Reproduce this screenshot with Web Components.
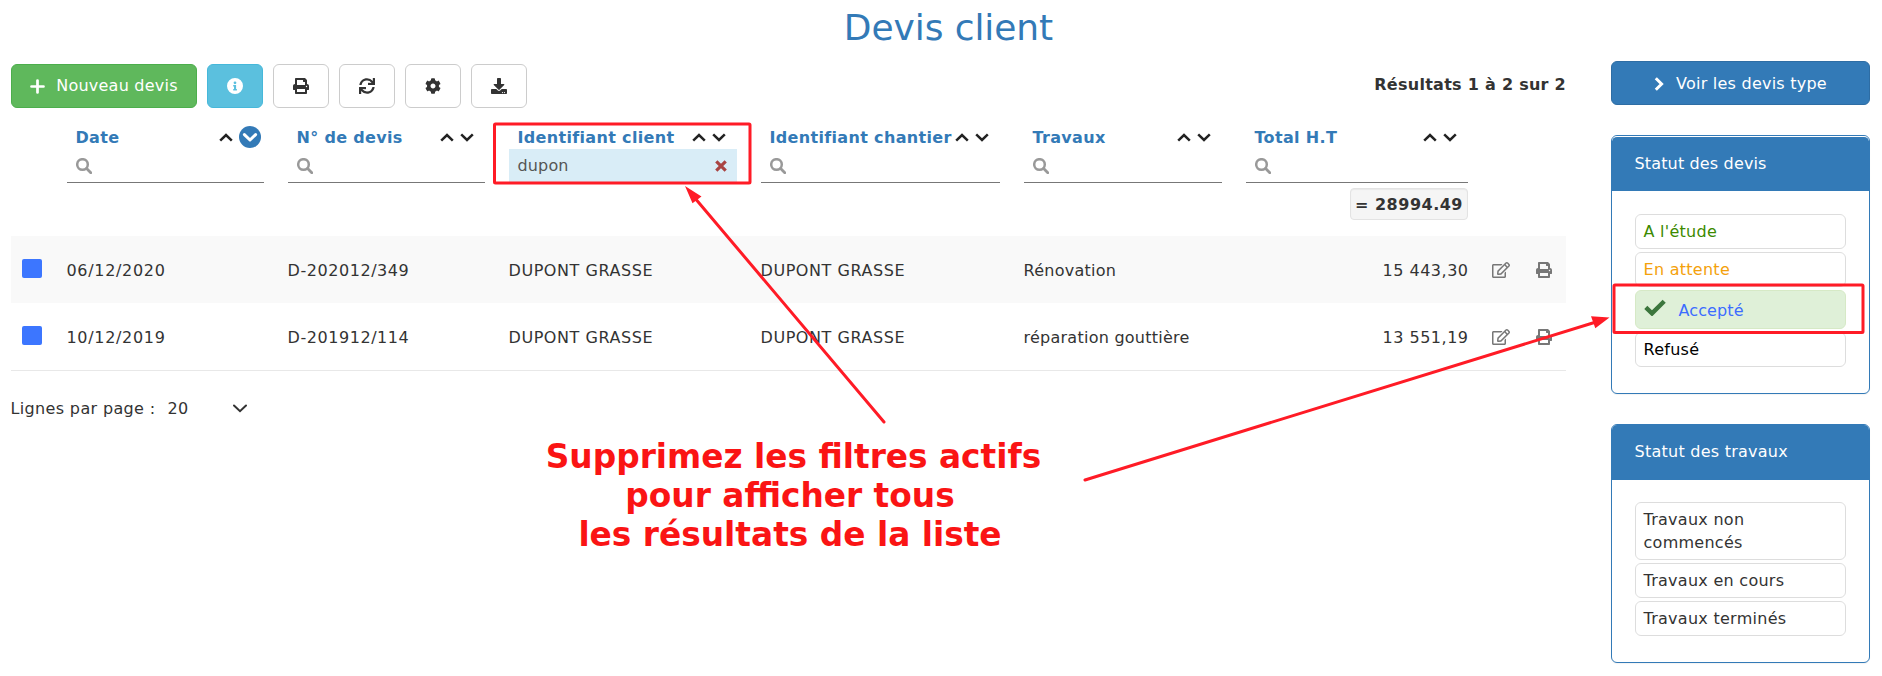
<!DOCTYPE html>
<html lang="fr">
<head>
<meta charset="utf-8">
<title>Devis client</title>
<style>
html,body{margin:0;background:#fff}
body{font:16px/22.86px Verdana,"DejaVu Sans",sans-serif;color:#333}
</style>
</head>
<body>
<devis-page></devis-page>
<script>
const ICONS = {
  plus: ['0 0 16 16','<path d="M8 1.6v12.8M1.6 8h12.8" fill="none" stroke="currentColor" stroke-width="2.9" stroke-linecap="round"/>'],
  info: ['0 0 16 16','<path fill-rule="evenodd" d="M8 0a8 8 0 1 0 0 16A8 8 0 0 0 8 0zm0 3.4a1.4 1.4 0 1 1 0 2.8 1.4 1.4 0 0 1 0-2.8zM6.2 7h2.9v4h.8v1.4H6.2V11H7V8.4h-.8z" fill="currentColor"/>'],
  print: ['0 0 512 512','<path fill="currentColor" d="M448 192V77.25c0-8.49-3.37-16.62-9.37-22.63L393.37 9.37c-6-6-14.14-9.37-22.63-9.37H96C78.33 0 64 14.33 64 32v160c-35.35 0-64 28.65-64 64v112c0 8.84 7.16 16 16 16h48v96c0 17.67 14.33 32 32 32h320c17.67 0 32-14.33 32-32v-96h48c8.84 0 16-7.16 16-16V256c0-35.35-28.65-64-64-64zm-64 256H128v-96h256v96zm0-224H128V64h192v48c0 8.84 7.16 16 16 16h48v96zm48 72c-13.25 0-24-10.75-24-24 0-13.26 10.75-24 24-24s24 10.74 24 24c0 13.25-10.75 24-24 24z"/>'],
  sync: ['0 0 512 512','<path fill="currentColor" d="M440.65 12.57l4 82.77A247.16 247.16 0 0 0 255.83 8C134.73 8 33.91 94.92 12.29 209.82A12 12 0 0 0 24.09 224h49.05a12 12 0 0 0 11.67-9.26 175.91 175.91 0 0 1 317-56.94l-101.46-4.86a12 12 0 0 0-12.57 12v47.41a12 12 0 0 0 12 12H500a12 12 0 0 0 12-12V12a12 12 0 0 0-12-12h-47.37a12 12 0 0 0-11.98 12.57zM255.83 432a175.61 175.61 0 0 1-146-77.8l101.8 4.87a12 12 0 0 0 12.57-12v-47.4a12 12 0 0 0-12-12H12a12 12 0 0 0-12 12V500a12 12 0 0 0 12 12h47.35a12 12 0 0 0 12-12.6l-4.15-82.57A247.17 247.17 0 0 0 255.83 504c121.11 0 221.93-86.92 243.55-201.82a12 12 0 0 0-11.8-14.18h-49.05a12 12 0 0 0-11.67 9.26A175.86 175.86 0 0 1 255.83 432z"/>'],
  cog: ['0 0 512 512','<path fill="currentColor" d="M487.4 315.7l-42.6-24.6c4.3-23.2 4.3-47 0-70.2l42.6-24.6c4.9-2.8 7.1-8.6 5.5-14-11.1-35.6-30-67.8-54.7-94.6-3.8-4.1-10-5.1-14.8-2.3L380.8 110c-17.9-15.4-38.5-27.3-60.8-35.1V25.8c0-5.6-3.9-10.5-9.4-11.7-36.7-8.2-74.3-7.8-109.2 0-5.5 1.2-9.4 6.1-9.4 11.7V75c-22.2 7.9-42.8 19.8-60.8 35.1L88.7 85.5c-4.9-2.8-11-1.9-14.8 2.3-24.7 26.7-43.6 58.9-54.7 94.6-1.7 5.4.6 11.2 5.5 14L67.3 221c-4.3 23.2-4.3 47 0 70.2l-42.6 24.6c-4.9 2.8-7.1 8.6-5.5 14 11.1 35.6 30 67.8 54.7 94.6 3.8 4.1 10 5.1 14.8 2.3l42.6-24.6c17.9 15.4 38.5 27.3 60.8 35.1v49.2c0 5.6 3.9 10.5 9.4 11.7 36.7 8.2 74.3 7.8 109.2 0 5.5-1.2 9.4-6.1 9.4-11.7v-49.2c22.2-7.9 42.8-19.8 60.8-35.1l42.6 24.6c4.9 2.8 11 1.9 14.8-2.3 24.7-26.7 43.6-58.9 54.7-94.6 1.5-5.5-.7-11.3-5.6-14.1zM256 336c-44.1 0-80-35.9-80-80s35.9-80 80-80 80 35.9 80 80-35.9 80-80 80z"/>'],
  download: ['0 0 512 512','<path fill="currentColor" d="M216 0h80c13.3 0 24 10.7 24 24v168h87.7c17.8 0 26.7 21.5 14.1 34.1L269.7 378.3c-7.5 7.5-19.8 7.5-27.3 0L90.1 226.1c-12.6-12.6-3.7-34.1 14.1-34.1H192V24c0-13.3 10.7-24 24-24zm296 376v112c0 13.3-10.7 24-24 24H24c-13.3 0-24-10.7-24-24V376c0-13.3 10.7-24 24-24h146.7l49 49c20.1 20.1 52.5 20.1 72.6 0l49-49H488c13.3 0 24 10.7 24 24zm-124 88c0-11-9-20-20-20s-20 9-20 20 9 20 20 20 20-9 20-20zm64 0c0-11-9-20-20-20s-20 9-20 20 9 20 20 20 20-9 20-20z"/>'],
  edit: ['0 0 576 512','<path fill="currentColor" d="M402.3 344.9l32-32c5-5 13.7-1.5 13.7 5.7V464c0 26.5-21.5 48-48 48H48c-26.5 0-48-21.5-48-48V112c0-26.5 21.5-48 48-48h273.5c7.1 0 10.7 8.6 5.7 13.7l-32 32c-1.5 1.5-3.5 2.3-5.7 2.3H48v352h352V350.5c0-2.1.8-4.1 2.3-5.6zm156.6-201.8L296.3 405.7l-90.4 10c-26.2 2.9-48.5-19.2-45.6-45.6l10-90.4L432.9 17.1c22.9-22.9 59.9-22.9 82.7 0l43.2 43.2c22.9 22.9 22.9 60 .1 82.8zM460.1 174L402 115.9 216.2 301.8l-7.3 65.3 65.3-7.3L460.1 174zm64.8-79.7l-43.2-43.2c-4.1-4.1-10.8-4.1-14.8 0L436 82l58.1 58.1 30.9-30.9c4-4.2 4-10.8-.1-14.9z"/>'],
  search: ['0 0 16 16','<circle cx="6.5" cy="6.5" r="5.3" fill="none" stroke="currentColor" stroke-width="2.5"/><path d="M10.6 10.6l4.2 4.2" stroke="currentColor" stroke-width="2.8" stroke-linecap="round"/>'],
  up: ['0 0 14 9','<path d="M1.2 7.6L7 2l5.8 5.6" fill="none" stroke="currentColor" stroke-width="2.5"/>'],
  down: ['0 0 14 9','<path d="M1.2 1.4L7 7l5.8-5.6" fill="none" stroke="currentColor" stroke-width="2.5"/>'],
  thin: ['0 0 14 9','<path d="M1 1.500L7 7.200l6-5.700" fill="none" stroke="currentColor" stroke-width="2" stroke-linecap="round"/>'],
  downon: ['0 0 22 22','<circle cx="11" cy="11" r="11" fill="#337ab7"/><path d="M5.4 8.6L11 14l5.6-5.4" fill="none" stroke="#fff" stroke-width="3" stroke-linecap="round" stroke-linejoin="round"/>'],
  right: ['0 0 10 16','<path d="M1.8 2.2L7.6 8l-5.8 5.8" fill="none" stroke="currentColor" stroke-width="3"/>'],
  times: ['0 0 12 12','<path d="M1.300 1.300l9.400 9.400M10.700 1.300l-9.400 9.400" fill="none" stroke="currentColor" stroke-width="3.200"/>'],
  check: ['0 0 22 17','<path d="M1.8 8.4L8 14.4 20.2 2.2" fill="none" stroke="currentColor" stroke-width="4.4"/>']
};
const define = (name, html) => customElements.define(name, class extends HTMLElement {
  constructor(){ super(); this.attachShadow({mode:'open'}); }
  connectedCallback(){ this.shadowRoot.innerHTML = typeof html === 'function' ? html(this) : html; }
});

define('ui-icon', el => {
  const [box, body] = ICONS[el.getAttribute('name')];
  const [, , w, h] = box.split(' ').map(Number);
  const height = Number(el.getAttribute('h') || 16);
  const width = (height * w / h).toFixed(2);
  return `<style>:host{display:inline-flex;flex:none}svg{display:block}</style><svg width="${width}" height="${height}" viewBox="${box}">${body}</svg>`;
});

define('ui-button', `<style>
:host{display:inline-flex;box-sizing:border-box;height:44px;align-items:center;justify-content:center;border:1px solid #ccc;border-radius:6px;background:#fff;color:#333;min-width:55px;letter-spacing:.23px}
:host([kind=success]){background:#5fb85c;border-color:#4cae4c;color:#fff;width:186px;gap:11px}
:host([kind=info]){background:#5bc0de;border-color:#46b8da;color:#fff;width:56px}
:host([kind=primary]){background:#337ab7;border-color:#2e6da4;color:#fff;width:100%;gap:12px;padding-top:2px}
</style><slot></slot>`);

define('column-head', el => {
  const value = el.getAttribute('value');
  const on = el.hasAttribute('sorted');
  return `<style>
:host{display:block;height:58px}
.top{display:flex;align-items:center;justify-content:space-between;height:24px;padding:1px ${on?3:11}px 0 8.5px;box-sizing:border-box;white-space:nowrap}
b{color:#337ab7;letter-spacing:.33px;padding-top:1px}
.sort{display:flex;align-items:center;gap:6px;color:#222;margin-left:-20px;height:22px}
.sort ui-icon[name=downon]{margin-top:-2px}
.field{display:flex;align-items:center;justify-content:space-between;height:34px;box-sizing:border-box;border-bottom:1px solid #777;padding:0 10px 0 9px;color:#999}
.field.on{background:#d9edf7;color:#555;padding-left:8.5px;letter-spacing:.15px}
.field.on>span:first-child{padding-top:2px}
.x{color:#a94442;display:flex}
</style><div class="top"><b>${el.getAttribute('label')}</b><span class="sort"><ui-icon name="up" h="9"></ui-icon><ui-icon name="${on?'downon':'down'}" h="${on?22:9}"></ui-icon></span></div>
<div class="field ${value?'on':''}">${value?`<span>${value}</span><span class="x"><ui-icon name="times" h="12"></ui-icon></span>`:'<ui-icon name="search" h="16"></ui-icon>'}</div>`;
});

const COLS = 'display:grid;grid-template-columns:56px 197px 24px 197px 24px 228px 24px 239px 24px 198px 24px 222px 98px';

define('quote-row', el => {
  const [d,n,c,s,t,a] = el.getAttribute('cells').split('|');
  return `<style>
:host{${COLS};align-items:center;height:67px;box-sizing:border-box;white-space:nowrap}
:host([odd]){background:#f9f9f9}
:host(:not([odd])){border-bottom:1px solid #e8e8e8;height:68px}
i{display:block;width:19.5px;height:19.5px;margin:-2px 0 0 11px;border-radius:2px;background:#3c76ff}
.t{padding-top:3px;margin-left:-.5px;letter-spacing:.56px}.d{letter-spacing:.68px}.w{letter-spacing:.25px}
.a{text-align:right;margin-right:-.5px;letter-spacing:.5px}.tools{display:flex;padding-left:23.5px;gap:26px;color:#777}
</style><i></i><span class="t d">${d}</span><span></span><span class="t">${n}</span><span></span><span class="t">${c}</span><span></span><span class="t">${s}</span><span></span><span class="t w">${t}</span><span></span><span class="t a">${a}</span>
<span class="tools"><ui-icon name="edit"></ui-icon><ui-icon name="print"></ui-icon></span>`;
});

define('quote-table', `<style>
:host{display:block}
.head{${COLS};height:111px;align-items:start}
.sum{display:flex;justify-content:flex-end;padding-top:5px}
.sum b{box-sizing:border-box;width:118px;height:32px;display:flex;align-items:center;justify-content:center;padding-top:2px;letter-spacing:.5px;white-space:nowrap;background:#f5f5f5;border:1px solid #e3e3e3;border-radius:4px;box-shadow:inset 0 1px 1px rgba(0,0,0,.05)}
</style><div class="head"><span></span><column-head label="Date" sorted></column-head><span></span><column-head label="N° de devis"></column-head><span></span><column-head label="Identifiant client" value="dupon"></column-head><span></span><column-head label="Identifiant chantier"></column-head><span></span><column-head label="Travaux"></column-head><span></span><div><column-head label="Total H.T"></column-head><div class="sum"><b>= 28994.49</b></div></div></div>
<quote-row odd cells="06/12/2020|D-202012/349|DUPONT GRASSE|DUPONT GRASSE|Rénovation|15 443,30"></quote-row>
<quote-row cells="10/12/2019|D-201912/114|DUPONT GRASSE|DUPONT GRASSE|réparation gouttière|13 551,19"></quote-row>`);

define('status-item', `<style>
:host{display:flex;align-items:center;box-sizing:border-box;border:1px solid #ddd;border-radius:6px;padding:6px 8px 4px 7.5px;min-height:35px;letter-spacing:.27px}
:host([active]){background:#dff0d8;border-color:#d6e9c6;min-height:39px;padding-top:7px;letter-spacing:.1px}
ui-icon{color:#3c763d;margin:-7px 13px 0 0}
:host(:not([active])) ui-icon{display:none}
</style><ui-icon name="check" h="17"></ui-icon><span><slot></slot></span>`);

define('status-panel', el => `<style>
:host{display:block;box-sizing:border-box;border:1px solid #337ab7;border-radius:6px;overflow:hidden;background:#fff;box-shadow:0 1px 1px rgba(0,0,0,.05)}
header{background:#337ab7;color:#fff;height:55px;box-sizing:border-box;padding:0 22.5px;display:flex;align-items:center;letter-spacing:.25px}
:host([seam]) header{border-top:1px solid #fff;border-radius:5px 5px 0 0;letter-spacing:.15px}
.list{display:flex;flex-direction:column;gap:3px;padding:22px 23px 26px}
:host([seam]) .list{padding-top:23px}
</style><header><span>${el.getAttribute('label')}</span></header><div class="list"><slot></slot></div>`);

define('page-notes', `<style>
:host{position:absolute;left:0;top:0;width:1882px;height:676px;pointer-events:none}
svg{position:absolute;left:0;top:0}
p{position:absolute;left:490px;top:438px;width:600px;margin:0;text-align:center;font:bold 32.8px/39px "DejaVu Sans",sans-serif;color:#fa1414}
span{padding-left:7px}
</style><svg width="1882" height="676" fill="none" stroke="#ff1b26" stroke-width="3">
<rect x="494.5" y="124" width="255.500" height="59" rx="1"/><rect x="1614" y="285" width="249" height="47.500" rx="1"/>
<path d="M884 422L694 197M1085 480L1596 322" stroke-linecap="round"/>
<path d="M685 186l16.500 10.500-9 6.800zM1609.500 317.500l-18.500-1.300 4.300 12z" fill="#ff1b26" stroke="none"/></svg>
<p><span>Supprimez les filtres actifs</span><br>pour afficher tous<br>les résultats de la liste</p>`);

define('devis-page', `<style>
:host{display:block;position:relative;width:1882px;height:676px;overflow:hidden}
h1{margin:0;height:61px;box-sizing:border-box;padding-top:8px;padding-left:15px;text-align:center;font-size:36px;line-height:40px;font-weight:400;color:#337ab7;letter-spacing:-.08px}
.cols{display:grid;grid-template-columns:1555px 259px;column-gap:45px;padding-left:11px;align-items:start}
.bar{display:flex;gap:10px;height:64px;padding-top:3px;box-sizing:border-box}
.bar ui-button+ui-button+ui-button{min-width:56px}
.count{margin-left:auto;margin-top:10px;white-space:nowrap;letter-spacing:.27px}
.pager{display:flex;align-items:center;margin-top:27px;height:23px;letter-spacing:.35px;margin-left:-.5px}
.pager span{margin-left:12px;width:66px}
.pager ui-icon{margin-top:-2px}
aside{display:flex;flex-direction:column;align-items:stretch}
status-panel.first{margin:30px 0 30px}
</style><h1>Devis client</h1>
<div class="cols"><main>
<div class="bar"><ui-button kind="success"><ui-icon name="plus" h="15"></ui-icon><span>Nouveau devis</span></ui-button><ui-button kind="info"><ui-icon name="info"></ui-icon></ui-button><ui-button><ui-icon name="print"></ui-icon></ui-button><ui-button><ui-icon name="sync"></ui-icon></ui-button><ui-button><ui-icon name="cog"></ui-icon></ui-button><ui-button><ui-icon name="download"></ui-icon></ui-button><b class="count">Résultats 1 à 2 sur 2</b></div>
<quote-table></quote-table>
<div class="pager">Lignes par page :<span>20</span><ui-icon name="thin" h="9"></ui-icon></div>
</main><aside>
<ui-button kind="primary"><ui-icon name="right"></ui-icon><span>Voir les devis type</span></ui-button>
<status-panel class="first" seam label="Statut des devis"><status-item style="color:#3c8a00">A l'étude</status-item><status-item style="color:#f4a10b">En attente</status-item><status-item active style="color:#3c6cff">Accepté</status-item><status-item style="color:#000">Refusé</status-item></status-panel>
<status-panel label="Statut des travaux"><status-item>Travaux non commencés</status-item><status-item>Travaux en cours</status-item><status-item>Travaux terminés</status-item></status-panel>
</aside></div><page-notes></page-notes>`);
</script>
</body>
</html>
